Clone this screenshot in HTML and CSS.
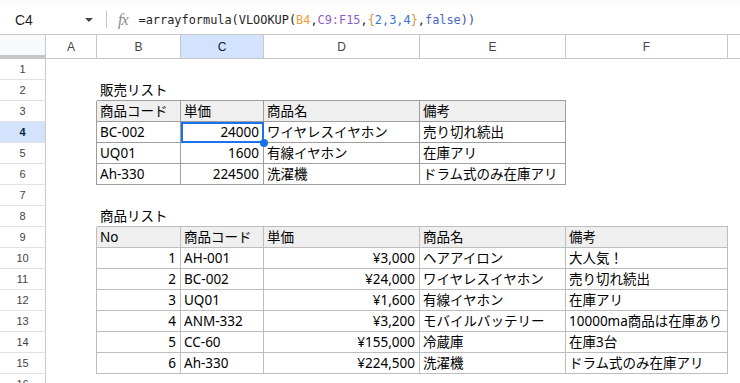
FILE: index.html
```html
<!DOCTYPE html>
<html lang="ja">
<head>
  <meta charset="UTF-8">
  <title>販売リスト - Sheet</title>
  <link rel="stylesheet" href="styles.css">
</head>
<body>
  <div class="top-strip"></div>

  <div class="formula-bar">
    <div class="name-box">
      <span class="cell-ref">C4</span>
      <span class="caret"></span>
    </div>
    <div class="divider"></div>
    <span class="fx">fx</span>
    <div class="formula"><span class="f-fn">=arrayformula(VLOOKUP(</span><span class="f-ref1">B4</span><span class="f-fn">,</span><span class="f-ref2">C9:F15</span><span class="f-fn">,</span><span class="f-brace">{</span><span class="f-num">2,3,4</span><span class="f-brace">}</span><span class="f-fn">,</span><span class="f-bool">false</span><span class="f-close">))</span></div>
  </div>

  <div class="sheet">
    <div class="row col-heads">
      <span class="corner"></span>
      <span class="ch">A</span><span class="ch">B</span><span class="ch active">C</span><span class="ch">D</span><span class="ch">E</span><span class="ch">F</span><span class="ch last"></span>
    </div>

    <div class="row"><span class="rh">1</span><span></span><span></span><span></span><span></span><span></span><span></span><span></span></div>

    <div class="row"><span class="rh">2</span><span></span><span class="c t1-top">販売リスト</span><span class="t1-top"></span><span class="t1-top"></span><span class="t1-top"></span><span></span><span></span></div>

    <div class="row"><span class="rh">3</span><span class="t1-left"></span><span class="c t1 hd">商品コード</span><span class="c t1 hd">単価</span><span class="c t1 hd">商品名</span><span class="c t1 hd">備考</span><span></span><span></span></div>

    <div class="row"><span class="rh active">4</span><span class="t1-left"></span><span class="c t1">BC-002</span><span class="c t1 num selected">24000</span><span class="c t1">ワイヤレスイヤホン</span><span class="c t1">売り切れ続出</span><span></span><span></span></div>

    <div class="row"><span class="rh">5</span><span class="t1-left"></span><span class="c t1">UQ01</span><span class="c t1 num">1600</span><span class="c t1">有線イヤホン</span><span class="c t1">在庫アリ</span><span></span><span></span></div>

    <div class="row"><span class="rh">6</span><span class="t1-left"></span><span class="c t1">Ah-330</span><span class="c t1 num">224500</span><span class="c t1">洗濯機</span><span class="c t1">ドラム式のみ在庫アリ</span><span></span><span></span></div>

    <div class="row"><span class="rh">7</span><span></span><span></span><span></span><span></span><span></span><span></span><span></span></div>

    <div class="row"><span class="rh">8</span><span></span><span class="c t2-top">商品リスト</span><span class="t2-top"></span><span class="t2-top"></span><span class="t2-top"></span><span class="t2-top"></span><span></span></div>

    <div class="row"><span class="rh">9</span><span class="t2-left"></span><span class="c t2 hd">No</span><span class="c t2 hd">商品コード</span><span class="c t2 hd">単価</span><span class="c t2 hd">商品名</span><span class="c t2 hd">備考</span><span></span></div>

    <div class="row"><span class="rh">10</span><span class="t2-left"></span><span class="c t2 num">1</span><span class="c t2">AH-001</span><span class="c t2 num">¥3,000</span><span class="c t2">ヘアアイロン</span><span class="c t2">大人気！</span><span></span></div>

    <div class="row"><span class="rh">11</span><span class="t2-left"></span><span class="c t2 num">2</span><span class="c t2">BC-002</span><span class="c t2 num">¥24,000</span><span class="c t2">ワイヤレスイヤホン</span><span class="c t2">売り切れ続出</span><span></span></div>

    <div class="row"><span class="rh">12</span><span class="t2-left"></span><span class="c t2 num">3</span><span class="c t2">UQ01</span><span class="c t2 num">¥1,600</span><span class="c t2">有線イヤホン</span><span class="c t2">在庫アリ</span><span></span></div>

    <div class="row"><span class="rh">13</span><span class="t2-left"></span><span class="c t2 num">4</span><span class="c t2">ANM-332</span><span class="c t2 num">¥3,200</span><span class="c t2">モバイルバッテリー</span><span class="c t2">10000ma商品は在庫あり</span><span></span></div>

    <div class="row"><span class="rh">14</span><span class="t2-left"></span><span class="c t2 num">5</span><span class="c t2">CC-60</span><span class="c t2 num">¥155,000</span><span class="c t2">冷蔵庫</span><span class="c t2">在庫3台</span><span></span></div>

    <div class="row"><span class="rh">15</span><span class="t2-left"></span><span class="c t2 num">6</span><span class="c t2">Ah-330</span><span class="c t2 num">¥224,500</span><span class="c t2">洗濯機</span><span class="c t2">ドラム式のみ在庫アリ</span><span></span></div>

    <div class="row"><span class="rh">16</span><span></span><span></span><span></span><span></span><span></span><span></span><span></span></div>
  </div>
</body>
</html>
```

FILE: styles.css
```css
:root {
  --grid-line: #e1e3e1;
  --head-line: #c7c7c7;
  --active: #d3e3fd;
  --blue: #1a73e8;
  --t1-line: #9e9e9e;
  --t2-line: #bdbdbd;
  --head-fill: #efefef;
}

body {
  margin: 0;
  background: #fff;
  color: #000;
  font-family: 'Liberation Sans', Arial, sans-serif;
  overflow: hidden;
}

.top-strip {
  height: 5px;
  background: #f9fbfd;
}

/* formula bar */
.formula-bar {
  height: 29px;
  border-bottom: 1px solid var(--head-line);
  display: flex;
  align-items: center;
}

.name-box {
  width: 106px;
  display: flex;
  align-items: center;
  padding-left: 15px;
  box-sizing: border-box;
}

.cell-ref {
  flex: 1;
  font-size: 14px;
  color: #1f1f1f;
}

.caret {
  width: 0;
  height: 0;
  border-left: 4px solid transparent;
  border-right: 4px solid transparent;
  border-top: 4px solid #444;
  margin-right: 13px;
}

.divider {
  width: 1px;
  height: 17px;
  background: var(--head-line);
}

.fx {
  font-family: 'Liberation Serif', serif;
  font-style: italic;
  font-size: 16px;
  color: #8a8a8a;
  margin: 0 11px 0 11px;
  letter-spacing: -1px;
}

.formula {
  font-family: 'DejaVu Sans Mono', monospace;
  font-size: 11.9px;
  color: #1f1f1f;
  white-space: nowrap;
}

.f-ref1 { color: #f29d38; }
.f-ref2 { color: #8b5bc6; }
.f-brace { color: #d9933b; }
.f-num { color: #3b72d8; }
.f-bool { color: #4a68cc; }
.f-close { color: #3d4fa3; }

/* grid */
.row {
  display: grid;
  grid-template-columns: 46px 51px 84px 83px 156px 146px 162px 1fr;
  height: 21px;
}

.row > span {
  box-sizing: border-box;
  min-width: 0;
  white-space: nowrap;
}

.col-heads {
  height: 24px;
  border-bottom: 1px solid var(--head-line);
  box-sizing: border-box;
}

.col-heads > span {
  border-right: 1px solid var(--head-line);
  display: flex;
  align-items: center;
  justify-content: center;
  font-size: 12px;
  color: #444;
}

.col-heads .last {
  border-right: none;
}

.corner {
  background: #f8f9fa;
  box-shadow: inset 0 -3px 0 #c4c7c5;
}

.ch.active {
  background: var(--active);
  color: #0b1f45;
}

.rh {
  border-right: 1px solid var(--head-line);
  border-bottom: 1px solid var(--grid-line);
  display: flex;
  align-items: center;
  justify-content: center;
  font-size: 11px;
  color: #444;
}

.rh.active {
  background: var(--active);
  color: #0b1f45;
  font-weight: bold;
}

/* cells */
.c {
  font-family: 'Noto Sans', 'Noto Sans CJK JP', sans-serif;
  font-size: 13.5px;
  line-height: 20px;
  padding: 0 4px 0 3px;
  overflow: visible;
}

.num {
  text-align: right;
}

.hd {
  background: var(--head-fill);
}

.t1 {
  border-right: 1px solid var(--t1-line);
  border-bottom: 1px solid var(--t1-line);
}

.t1-top {
  border-bottom: 1px solid var(--t1-line);
}

.t1-left {
  border-right: 1px solid var(--t1-line);
}

.t2 {
  border-right: 1px solid var(--t2-line);
  border-bottom: 1px solid var(--t2-line);
}

.t2-top {
  border-bottom: 1px solid var(--t2-line);
}

.t2-left {
  border-right: 1px solid var(--t2-line);
}

/* selected cell */
.selected {
  position: relative;
}

.selected::before {
  content: '';
  position: absolute;
  top: 0;
  left: 0;
  right: -1px;
  bottom: -1px;
  border: 2px solid var(--blue);
}

.selected::after {
  content: '';
  position: absolute;
  right: -5px;
  bottom: -5px;
  width: 8px;
  height: 8px;
  border-radius: 50%;
  background: var(--blue);
}
```
